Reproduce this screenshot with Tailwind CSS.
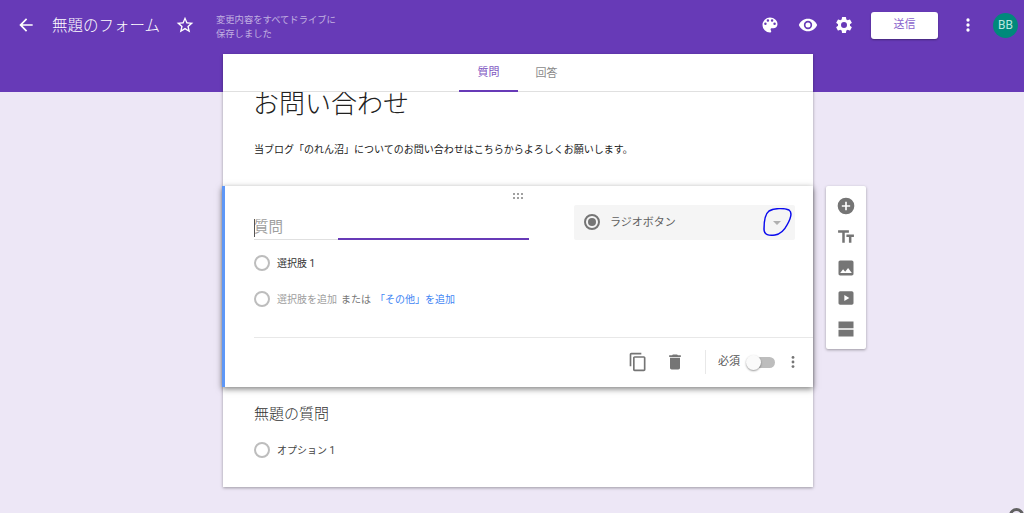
<!DOCTYPE html>
<html lang="ja">
  <head>
    <meta charset="UTF-8" />
    <title>無題のフォーム</title>
    <script src="https://cdn.jsdelivr.net/npm/@tailwindcss/browser@4"></script>
  </head>
  <body class="bg-[#ede7f6] font-['Roboto','Noto_Sans_CJK_JP',sans-serif] overflow-hidden">
    <div class="relative h-[513px] w-[1024px] overflow-hidden">
      <!-- Header -->
      <header class="h-[92px] bg-[#673ab7] text-white">
        <div class="flex items-center h-[50px]">
          <svg class="w-5 h-5 ml-[16px] fill-white" viewBox="0 0 24 24"><path d="M20 11H7.830l5.590-5.590L12 4l-8 8 8 8 1.410-1.410L7.830 13H20v-2z"/></svg>
          <h1 class="ml-[16px] w-[108px] text-[15.500px] font-light whitespace-nowrap font-['Noto_Sans_CJK_JP']">無題のフォーム</h1>
          <svg class="w-5 h-5 ml-[15px] fill-white" viewBox="0 0 24 24"><path d="M22 9.240l-7.190-.620L12 2 9.190 8.630 2 9.240l5.460 4.730L5.820 21 12 17.270 18.180 21l-1.630-7.030L22 9.240zM12 15.400l-3.760 2.270 1-4.280-3.320-2.880 4.380-.380L12 6.100l1.710 4.040 4.380.380-3.320 2.880 1 4.280L12 15.400z"/></svg>
          <p class="ml-[21px] w-[130px] text-[9.300px] leading-[14px] text-white/60 mt-[4px]">変更内容をすべてドライブに<br />保存しました</p>
          <div class="ml-auto flex items-center">
            <svg class="w-5 h-5 fill-white" viewBox="0 0 24 24"><path d="M12 3a9 9 0 0 0 0 18c.830 0 1.500-.670 1.500-1.500 0-.390-.150-.740-.390-1.010-.230-.260-.380-.610-.380-.990 0-.830.670-1.500 1.500-1.500H16c2.760 0 5-2.240 5-5 0-4.420-4.030-8-9-8zm-5.500 9a1.500 1.500 0 1 1 0-3 1.500 1.500 0 0 1 0 3zm3-4a1.500 1.500 0 1 1 0-3 1.500 1.500 0 0 1 0 3zm5 0a1.500 1.500 0 1 1 0-3 1.500 1.500 0 0 1 0 3zm3 4a1.500 1.500 0 1 1 0-3 1.500 1.500 0 0 1 0 3z"/></svg>
            <svg class="w-5 h-5 ml-[18px] fill-white" viewBox="0 0 24 24"><path d="M12 4.500C7 4.500 2.730 7.610 1 12c1.730 4.390 6 7.500 11 7.500s9.270-3.110 11-7.500c-1.730-4.390-6-7.500-11-7.500zM12 17a5 5 0 1 1 0-10 5 5 0 0 1 0 10zm0-8a3 3 0 1 0 0 6 3 3 0 0 0 0-6z"/></svg>
            <svg class="w-5 h-5 ml-[16px] fill-white" viewBox="0 0 24 24"><path d="M19.140 12.940c.040-.300.060-.610.060-.940s-.020-.640-.070-.940l2.030-1.580a.490.490 0 0 0 .120-.610l-1.920-3.320a.490.490 0 0 0-.590-.220l-2.390.960a7 7 0 0 0-1.620-.940l-.360-2.540a.480.480 0 0 0-.480-.410h-3.840a.480.480 0 0 0-.470.410l-.360 2.540c-.590.240-1.130.570-1.620.940l-2.390-.960a.480.480 0 0 0-.590.220L2.740 8.870a.480.480 0 0 0 .120.610l2.030 1.580c-.050.300-.090.630-.090.940s.020.640.070.940l-2.030 1.580a.490.490 0 0 0-.12.610l1.920 3.320c.120.220.370.290.590.220l2.390-.96c.500.380 1.030.700 1.620.940l.360 2.540c.050.240.240.410.480.410h3.840c.240 0 .440-.170.470-.410l.360-2.540a7 7 0 0 0 1.620-.94l2.390.96c.220.080.470 0 .59-.22l1.920-3.320a.480.480 0 0 0-.12-.61l-2.010-1.580zM12 15.600a3.600 3.600 0 1 1 0-7.200 3.600 3.600 0 0 1 0 7.200z"/></svg>
            <button class="ml-[17px] w-[67px] h-[27px] mt-[1px] bg-white rounded-[3px] shadow-[0_1px_2px_rgba(0,0,0,0.35)] text-[#8a63cc] text-[11px]">送信</button>
            <svg class="w-5 h-5 ml-[20px] fill-white" viewBox="0 0 24 24"><circle cx="12" cy="6" r="2"/><circle cx="12" cy="12" r="2"/><circle cx="12" cy="18" r="2"/></svg>
            <div class="ml-[15px] mr-[6px] w-[25px] h-[25px] rounded-full bg-[#00897b] text-[#b8e6df] text-[12px] flex items-center justify-center">BB</div>
          </div>
        </div>
      </header>

      <div class="flex items-start -mt-[38px] ml-[223px]">
        <!-- Form column -->
        <main class="w-[590px] h-[433px] bg-white shadow-[0_1px_3px_rgba(0,0,0,0.35)] flex flex-col">
          <!-- Tabs -->
          <nav class="relative z-10 h-[38px] shrink-0 bg-white border-b border-[#e0e0e0] flex justify-center text-[11px]">
            <div class="w-[59px] h-[38px] ml-[-1px] pt-[2px] border-b-2 border-[#673ab7] text-[#7e57c2] flex items-center justify-center">質問</div>
            <div class="w-[57px] h-[38px] pt-[2px] mr-[1px] text-[#8a8a8a] flex items-center justify-center">回答</div>
          </nav>
          <!-- Form title -->
          <section class="h-[94px] shrink-0 pl-[31px] overflow-visible">
            <h2 class="text-[26px] leading-[38px] -mt-[9px] -ml-[1px] font-light text-[#212121] font-['Noto_Sans_CJK_JP']">お問い合わせ</h2>
            <p class="mt-[21px] text-[10px] leading-[16px] text-[#212121] whitespace-nowrap">当ブログ「のれん沼」についてのお問い合わせはこちらからよろしくお願いします。</p>
          </section>
          <!-- Active question -->
          <section class="relative z-10 -ml-[1px] h-[201px] shrink-0 bg-white border-l-[3px] border-[#5e97f6] shadow-[0_2px_6px_rgba(0,0,0,0.5)] flex flex-col">
            <div class="h-[19px] flex justify-center items-start pt-[7px] pr-[2px]">
              <div class="grid grid-cols-3 gap-x-[2px] gap-y-[2px]">
                <i class="w-[2px] h-[2px] bg-[#a0a0a0]"></i><i class="w-[2px] h-[2px] bg-[#a0a0a0]"></i><i class="w-[2px] h-[2px] bg-[#a0a0a0]"></i>
                <i class="w-[2px] h-[2px] bg-[#a0a0a0]"></i><i class="w-[2px] h-[2px] bg-[#a0a0a0]"></i><i class="w-[2px] h-[2px] bg-[#a0a0a0]"></i>
              </div>
            </div>
            <div class="flex items-start pl-[29px] pr-[18px]">
              <div class="w-[275px] h-[35px] flex items-end">
                <div class="w-full h-[34px] border-b border-[#e0e0e0] relative text-[14.500px] leading-[44px] text-[#9e9e9e]">
                  質問
                  <div class="absolute left-0 top-[13px] w-px h-[18px] bg-[#555]"></div>
                  <div class="absolute left-[84px] right-0 -bottom-[1px] h-[2px] bg-[#673ab7]"></div>
                </div>
              </div>
              <div class="ml-auto w-[221px] h-[35px] bg-[#f5f5f5] rounded-[2px] flex items-center pl-[10px]">
                <span class="w-4 h-4 -mt-[1px] rounded-full border-2 border-[#757575] flex items-center justify-center"><i class="w-2 h-2 rounded-full bg-[#757575]"></i></span>
                <span class="ml-[10px] mt-[2px] text-[11px] text-[#5f5f5f]">ラジオボタン</span>
                <span class="relative ml-auto mr-[2px] w-[32px] h-[29px] flex items-center justify-center">
                  <i class="w-0 h-0 border-x-[4.500px] border-x-transparent border-t-[4px] border-t-[#b0b0b0]"></i>
                  <svg class="absolute inset-0" width="32" height="29" viewBox="0 0 32 29" fill="none" stroke="#0a0aee" stroke-width="1.500"><path d="M8 3C13 0 23 0 28 2c3 2 2 8-2 15-3 6-6 9-12 10-6 1-11 0-11-6 0-6 1-15 5-18z"/></svg>
                </span>
              </div>
            </div>
            <div class="flex items-center pl-[29px] mt-[9px] h-[28px]">
              <i class="w-4 h-4 rounded-full border-2 border-[#bdbdbd]"></i>
              <span class="ml-[7px] text-[10px] text-[#333]">選択肢 1</span>
            </div>
            <div class="flex items-center pl-[29px] mt-[8px] h-[28px] text-[10px]">
              <i class="w-4 h-4 rounded-full border-2 border-[#bdbdbd]"></i>
              <span class="ml-[7px] text-[#9e9e9e]">選択肢を追加</span>
              <span class="ml-[4px] text-[#757575]">または</span>
              <span class="ml-[4px] text-[#4285f4]">「その他」を追加</span>
            </div>
            <div class="ml-[29px] mt-[24px] border-t border-[#e8e8e8] flex items-center justify-end h-[49px] pr-[10px]">
              <svg class="w-5 h-5 fill-[#757575]" viewBox="0 0 24 24"><path d="M16 1H4c-1.100 0-2 .900-2 2v14h2V3h12V1zm3 4H8c-1.100 0-2 .900-2 2v14c0 1.100.900 2 2 2h11c1.100 0 2-.900 2-2V7c0-1.100-.900-2-2-2zm0 16H8V7h11v14z"/></svg>
              <svg class="w-5 h-5 ml-[17px] fill-[#757575]" viewBox="0 0 24 24"><path d="M6 19c0 1.100.900 2 2 2h8c1.100 0 2-.900 2-2V7H6v12zM19 4h-3.500l-1-1h-5l-1 1H5v2h14V4z"/></svg>
              <i class="ml-[20px] w-px h-[24px] bg-[#e8e8e8]"></i>
              <span class="ml-[12px] text-[11px] text-[#555]">必須</span>
              <span class="relative ml-[7px] w-[28px] h-[11px] rounded-full bg-[#bdbdbd]"><i class="absolute -left-[1px] -top-[2px] w-[15px] h-[15px] rounded-full bg-[#fafafa] shadow-[0_1px_2px_rgba(0,0,0,0.4)]"></i></span>
              <svg class="w-5 h-5 ml-[8px] fill-[#757575]" viewBox="0 0 24 24"><circle cx="12" cy="6.500" r="1.700"/><circle cx="12" cy="12" r="1.700"/><circle cx="12" cy="17.500" r="1.700"/></svg>
            </div>
          </section>
          <!-- Collapsed question -->
          <section class="pl-[31px]">
            <h3 class="mt-[16px] text-[15px] leading-[22px] font-light text-[#333]">無題の質問</h3>
            <div class="flex items-center mt-[15px] h-[20px]">
              <i class="w-4 h-4 rounded-full border-2 border-[#bdbdbd]"></i>
              <span class="ml-[7px] text-[10px] text-[#444]">オプション 1</span>
            </div>
          </section>
        </main>

        <!-- Side toolbar -->
        <aside class="ml-[13px] mt-[132px] w-[40px] h-[163px] bg-white rounded-[2px] shadow-[0_1px_3px_rgba(0,0,0,0.35)] flex flex-col items-center pt-[10px] gap-[10.750px]">
          <svg class="w-5 h-5 fill-[#757575]" viewBox="0 0 24 24"><path d="M12 2a10 10 0 1 0 0 20 10 10 0 0 0 0-20zm5 11h-4v4h-2v-4H7v-2h4V7h2v4h4v2z"/></svg>
          <svg class="w-5 h-5 fill-[#757575]" viewBox="0 0 24 24"><path d="M2.500 4v3h5v12h3V7h5V4h-13zm19 5h-9v3h3v7h3v-7h3V9z"/></svg>
          <svg class="w-5 h-5 fill-[#757575]" viewBox="0 0 24 24"><path d="M21 19V5c0-1.100-.900-2-2-2H5c-1.100 0-2 .900-2 2v14c0 1.100.900 2 2 2h14c1.100 0 2-.900 2-2zM8.500 13.500l2.500 3.010L14.500 12l4.500 6H5l3.500-4.500z"/></svg>
          <svg class="w-5 h-5 fill-[#757575]" viewBox="0 0 24 24"><path d="M19 4H5c-1.100 0-2 .900-2 2v12c0 1.100.900 2 2 2h14c1.100 0 2-.900 2-2V6c0-1.100-.900-2-2-2zm-9 11.500v-7l6 3.500-6 3.500z"/></svg>
          <svg class="w-5 h-5 fill-[#757575]" viewBox="0 0 24 24"><path d="M3 3h18v8H3zM3 13h18v8H3z"/></svg>
        </aside>
      </div>

      <!-- Corner help button, cut by the window edge -->
      <div class="absolute left-[1009px] top-[508px] w-[15px] h-[15px] rounded-full border-[3px] border-[#616161]"></div>
    </div>
  </body>
</html>
